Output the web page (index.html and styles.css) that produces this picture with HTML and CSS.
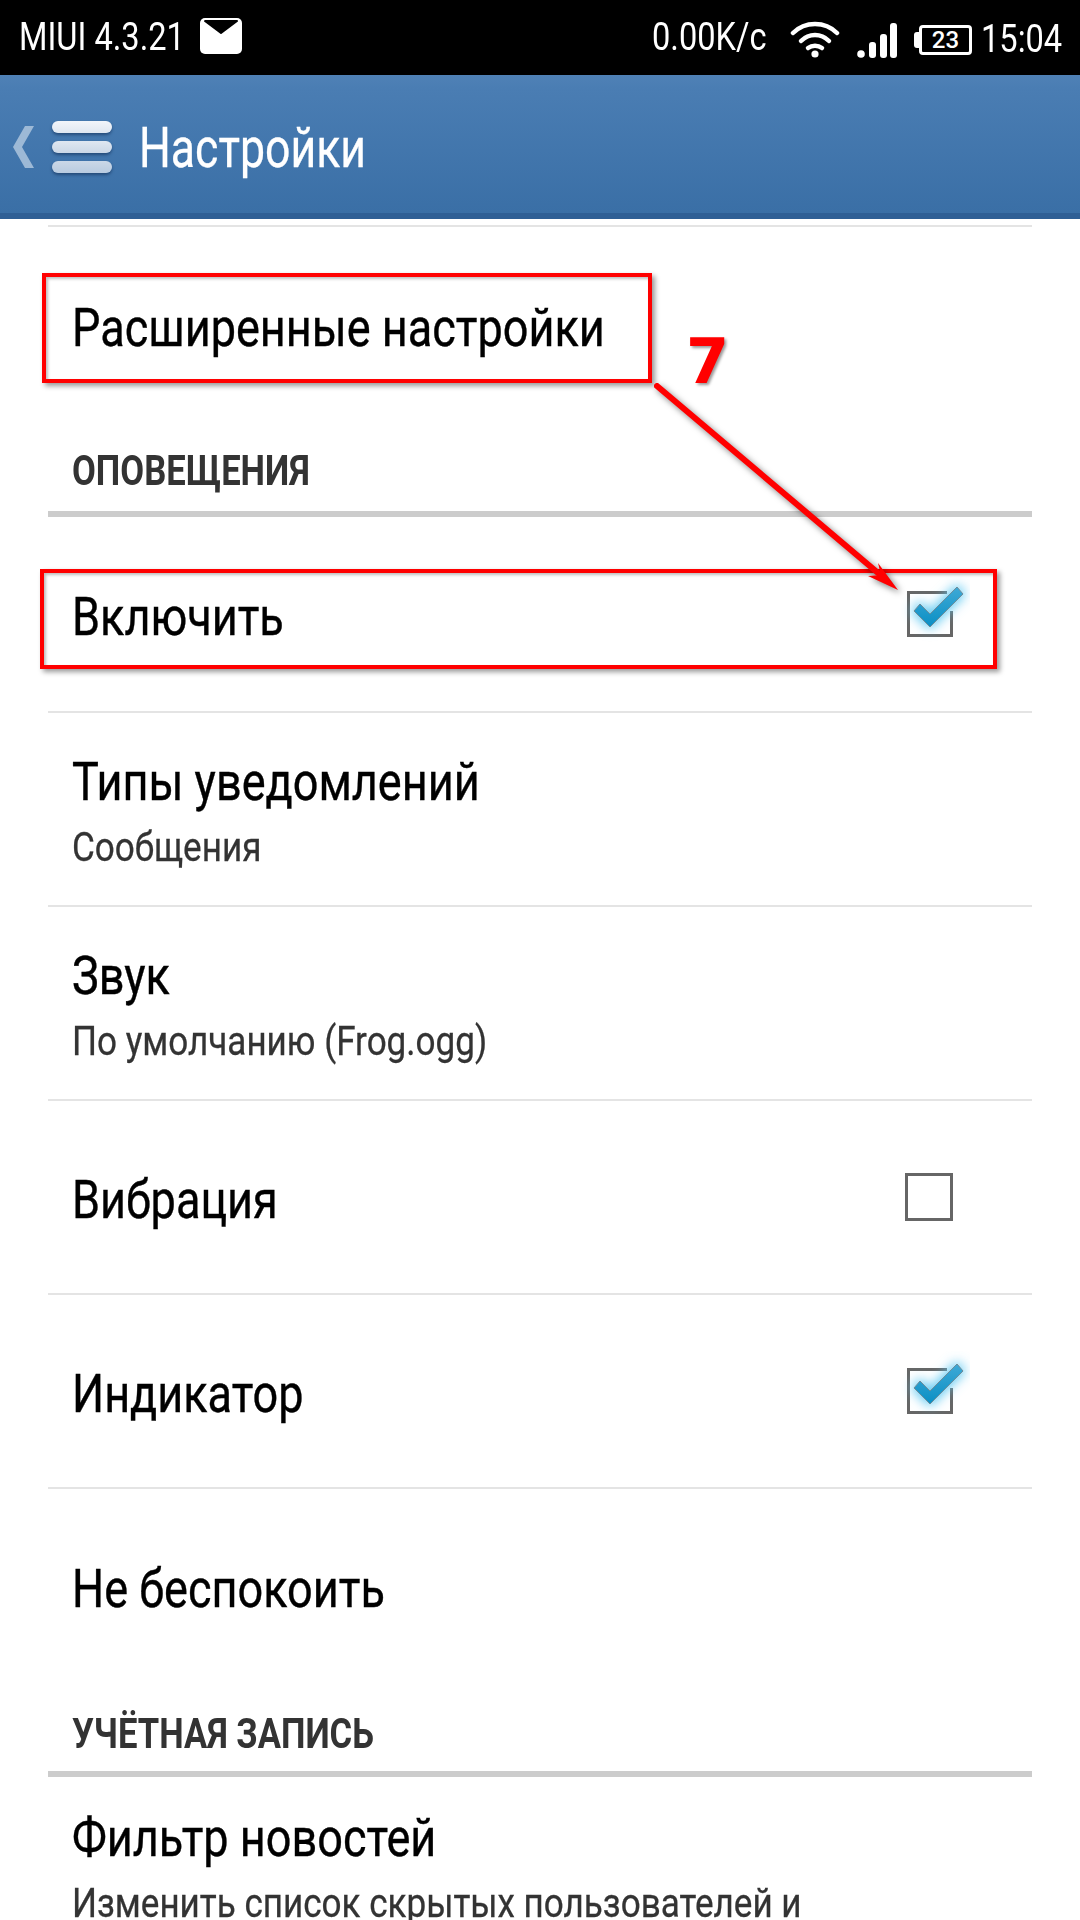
FILE: index.html
```html
<!DOCTYPE html>
<html lang="ru">
<head>
    <meta charset="UTF-8">
    <title>Настройки</title>
    <link rel="stylesheet" href="styles.css">
</head>
<body>
    <svg class="defs" width="0" height="0">
        <defs>
            <filter id="glow" x="-50%" y="-50%" width="200%" height="200%">
                <feGaussianBlur stdDeviation="6"></feGaussianBlur>
            </filter>
            <linearGradient id="tick" x1="0" y1="0" x2="0" y2="1">
                <stop offset="0" stop-color="#3fa9d6"></stop>
                <stop offset="1" stop-color="#0a8fc4"></stop>
            </linearGradient>
            <symbol id="checked" viewBox="0 0 70 80">
                <path d="M47 18.5H8.5V61.5H51.5V37" fill="none" stroke="#666" stroke-width="3"></path>
                <polygon points="14,37 30,53 63,20 57,13 30,40 20,30" fill="#5cc8f2" stroke="#5cc8f2" stroke-width="4" filter="url(#glow)"></polygon>
                <polygon points="14,37 30,53 63,20 57,13 30,40 20,30" fill="url(#tick)" stroke="#6f8c99" stroke-width="1"></polygon>
            </symbol>
        </defs>
    </svg>

    <div class="statusbar">
        <div class="status-group">
            <span class="status-text">MIUI 4.3.21</span>
            <svg class="ico-mail" width="42" height="36" viewBox="0 0 42 36">
                <rect width="42" height="36" rx="5" fill="#fff"></rect>
                <path d="M5 3H37L21 15Z" fill="#000" stroke="#000" stroke-width="2" stroke-linejoin="round"></path>
            </svg>
        </div>
        <div class="status-group right">
            <span class="status-text speed">0.00K/c</span>
            <svg class="ico-wifi" width="50" height="38" viewBox="0 0 50 38" fill="none" stroke="#fff" stroke-width="4.5" stroke-linecap="round">
                <path d="M3 13C15 1 35 1 47 13"></path>
                <path d="M11 21C19 13 31 13 39 21"></path>
                <path d="M18 28C22 25 28 25 32 28"></path>
                <circle cx="25" cy="34" r="3.6" fill="#fff" stroke="none"></circle>
            </svg>
            <svg class="ico-signal" width="40" height="35" viewBox="0 0 40 35" fill="#fff">
                <circle cx="4" cy="31" r="3.8"></circle>
                <rect x="12" y="19" width="7" height="16" rx="3"></rect>
                <rect x="23" y="11" width="7" height="24" rx="3"></rect>
                <rect x="33" y="0" width="7" height="35" rx="3"></rect>
            </svg>
            <div class="battery">
                <span class="battery-cap"></span>
                <span class="battery-body">23</span>
            </div>
            <span class="status-text clock">15:04</span>
        </div>
    </div>

    <div class="appbar">
        <svg class="ico-back" width="21" height="42" viewBox="0 0 21 42">
            <polygon points="21,0 12,0 0,21 12,42 21,42 9,21" fill="#9db9d6"></polygon>
        </svg>
        <div class="menu-icon">
            <span></span>
            <span></span>
            <span></span>
        </div>
        <span class="appbar-title">Настройки</span>
    </div>

    <div class="list">
        <div class="row first">
            <span class="row-title">Расширенные настройки</span>
        </div>
        <div class="section">
            <span class="section-title">ОПОВЕЩЕНИЯ</span>
        </div>
        <div class="row switch">
            <span class="row-title">Включить</span>
            <svg class="check"><use href="#checked"></use></svg>
        </div>
        <div class="row">
            <div class="row-text">
                <span class="row-title">Типы уведомлений</span>
                <span class="row-sub">Сообщения</span>
            </div>
        </div>
        <div class="row">
            <div class="row-text">
                <span class="row-title">Звук</span>
                <span class="row-sub">По умолчанию (Frog.ogg)</span>
            </div>
        </div>
        <div class="row">
            <span class="row-title">Вибрация</span>
            <span class="check-empty"></span>
        </div>
        <div class="row">
            <span class="row-title">Индикатор</span>
            <svg class="check"><use href="#checked"></use></svg>
        </div>
        <div class="row last">
            <span class="row-title">Не беспокоить</span>
        </div>
        <div class="section second">
            <span class="section-title">УЧЁТНАЯ ЗАПИСЬ</span>
        </div>
        <div class="row cut">
            <div class="row-text">
                <span class="row-title">Фильтр новостей</span>
                <span class="row-sub">Изменить список скрытых пользователей и</span>
            </div>
        </div>
    </div>

    <!-- red annotations on top of the screenshot -->
    <div class="mark mark-top"></div>
    <div class="mark mark-switch"></div>
    <span class="mark-number">7</span>
    <svg class="mark-arrow" width="1080" height="700" viewBox="0 0 1080 700">
        <line x1="657" y1="386" x2="884" y2="578" stroke="#f00" stroke-width="6" stroke-linecap="round"></line>
        <polygon points="898,590 868,576 881,575 878,563" fill="#f00"></polygon>
    </svg>
</body>
</html>
```

FILE: styles.css
```css
html, body {
    margin: 0;
    padding: 0;
}

body {
    position: relative;
    width: 1080px;
    height: 1920px;
    overflow: hidden;
    background-color: #fff;
    font-family: Roboto, "Noto Sans", sans-serif;
}

.defs {
    position: absolute;
}

/* status bar */
.statusbar {
    height: 75px;
    background-color: #000;
    color: #fff;
    display: flex;
    justify-content: space-between;
    align-items: center;
    padding: 0 19px;
}

.status-group {
    display: flex;
    align-items: center;
}

.status-text {
    font-size: 39px;
    line-height: 75px;
    display: inline-block;
    transform: scaleX(0.836);
    transform-origin: left center;
    white-space: nowrap;
}

.status-group .status-text {
    width: 164px;
}

.ico-mail {
    margin: -3px 0 0 17px;
}

.status-group .speed {
    width: 113px;
}

.ico-wifi {
    margin: 2px 0 0 25px;
}

.ico-signal {
    margin: 5px 0 0 17px;
}

.battery {
    display: flex;
    align-items: center;
    margin: 5px 0 0 17px;
}

.battery-cap {
    width: 5px;
    height: 16px;
    background-color: #fff;
    border-radius: 3px 0 0 3px;
}

.battery-body {
    width: 47px;
    height: 24px;
    border: 3px solid #fff;
    border-radius: 4px;
    font-size: 24px;
    font-weight: 500;
    line-height: 24px;
    text-align: center;
}

.status-group .clock {
    width: 80px;
    margin: 3px 0 0 9px;
}

/* app bar */
.appbar {
    height: 132px;
    padding-top: 6px;
    padding-left: 13px;
    border-bottom: 6px solid #2f5f95;
    background: linear-gradient(#4f81b6 0, #4a7db3 10%, #3a6fa6 100%);
    display: flex;
    align-items: center;
}

.menu-icon {
    display: flex;
    flex-direction: column;
    gap: 8px;
    margin-left: 18px;
}

.menu-icon span {
    display: block;
    width: 60px;
    height: 12px;
    border-radius: 6px;
    box-shadow: 0 2px 3px rgba(20, 50, 90, 0.6);
}

.menu-icon span:nth-child(1) {
    background: linear-gradient(#f2f5fa, #dfe7f1);
}

.menu-icon span:nth-child(2) {
    background: linear-gradient(#dfe7f1, #cbd8e7);
}

.menu-icon span:nth-child(3) {
    background: linear-gradient(#cbd8e7, #b8cbe0);
}

.appbar-title {
    font-size: 56px;
    color: #fff;
    margin: 1px 0 0 27px;
    -webkit-text-stroke: 0.3px #fff;
    transform: scaleX(0.797);
    transform-origin: left center;
}

/* settings list */
.list {
    margin: 6px 48px 0;
    border-top: 2px solid #e4e4e4;
}

.row {
    height: 192px;
    border-bottom: 2px solid #e4e4e4;
    padding-left: 24px;
    display: flex;
    justify-content: space-between;
    align-items: center;
}

.row.first,
.row.last {
    border-bottom: 0;
}

.row.first {
    height: 196px;
}

.row.switch {
    height: 194px;
}

.row.last {
    height: 194px;
}

.row.cut {
    align-items: flex-start;
}

.row > .row-title {
    margin-top: 6px;
}

.row-text {
    display: flex;
    flex-direction: column;
    padding-top: 3px;
}

.row.cut .row-text {
    padding-top: 29px;
}

.row-title {
    font-size: 54px;
    color: #000;
    line-height: 64px;
    white-space: nowrap;
    -webkit-text-stroke: 0.4px #000;
    transform: scaleX(0.834);
    transform-origin: left center;
}

.row-sub {
    margin-top: 8px;
    font-size: 41px;
    color: #333;
    line-height: 50px;
    white-space: nowrap;
    -webkit-text-stroke: 0.3px #333;
    transform: scaleX(0.855);
    transform-origin: left center;
}

.section {
    height: 88px;
    border-bottom: 6px solid #ccc;
    padding-left: 24px;
}

.section-title {
    display: inline-block;
    margin-top: 23px;
    font-size: 43px;
    font-weight: 700;
    color: #333;
    line-height: 48px;
    transform: scaleX(0.805);
    transform-origin: left center;
}

.section.second .section-title {
    margin-top: 26px;
}

.check {
    width: 70px;
    height: 80px;
    margin-right: 62px;
}

.check-empty {
    width: 42px;
    height: 42px;
    border: 3px solid #666;
    margin-right: 79px;
}

/* annotations */
.mark {
    position: absolute;
    box-sizing: border-box;
    border: 4px solid #f00;
    box-shadow: 3px 3px 5px rgba(0, 0, 0, 0.4), inset 2px 2px 3px rgba(0, 0, 0, 0.25);
}

.mark-top {
    left: 42px;
    top: 273px;
    width: 610px;
    height: 110px;
}

.mark-switch {
    left: 40px;
    top: 569px;
    width: 957px;
    height: 100px;
}

.mark-number {
    position: absolute;
    left: 686px;
    top: 326px;
    font-family: "DejaVu Sans", sans-serif;
    font-size: 62px;
    font-weight: 700;
    line-height: 72px;
    color: #f00;
    text-shadow: 2px 2px 3px rgba(0, 0, 0, 0.4);
}

.mark-arrow {
    position: absolute;
    left: 0;
    top: 0;
    filter: drop-shadow(3px 3px 3px rgba(0, 0, 0, 0.5));
}
```
